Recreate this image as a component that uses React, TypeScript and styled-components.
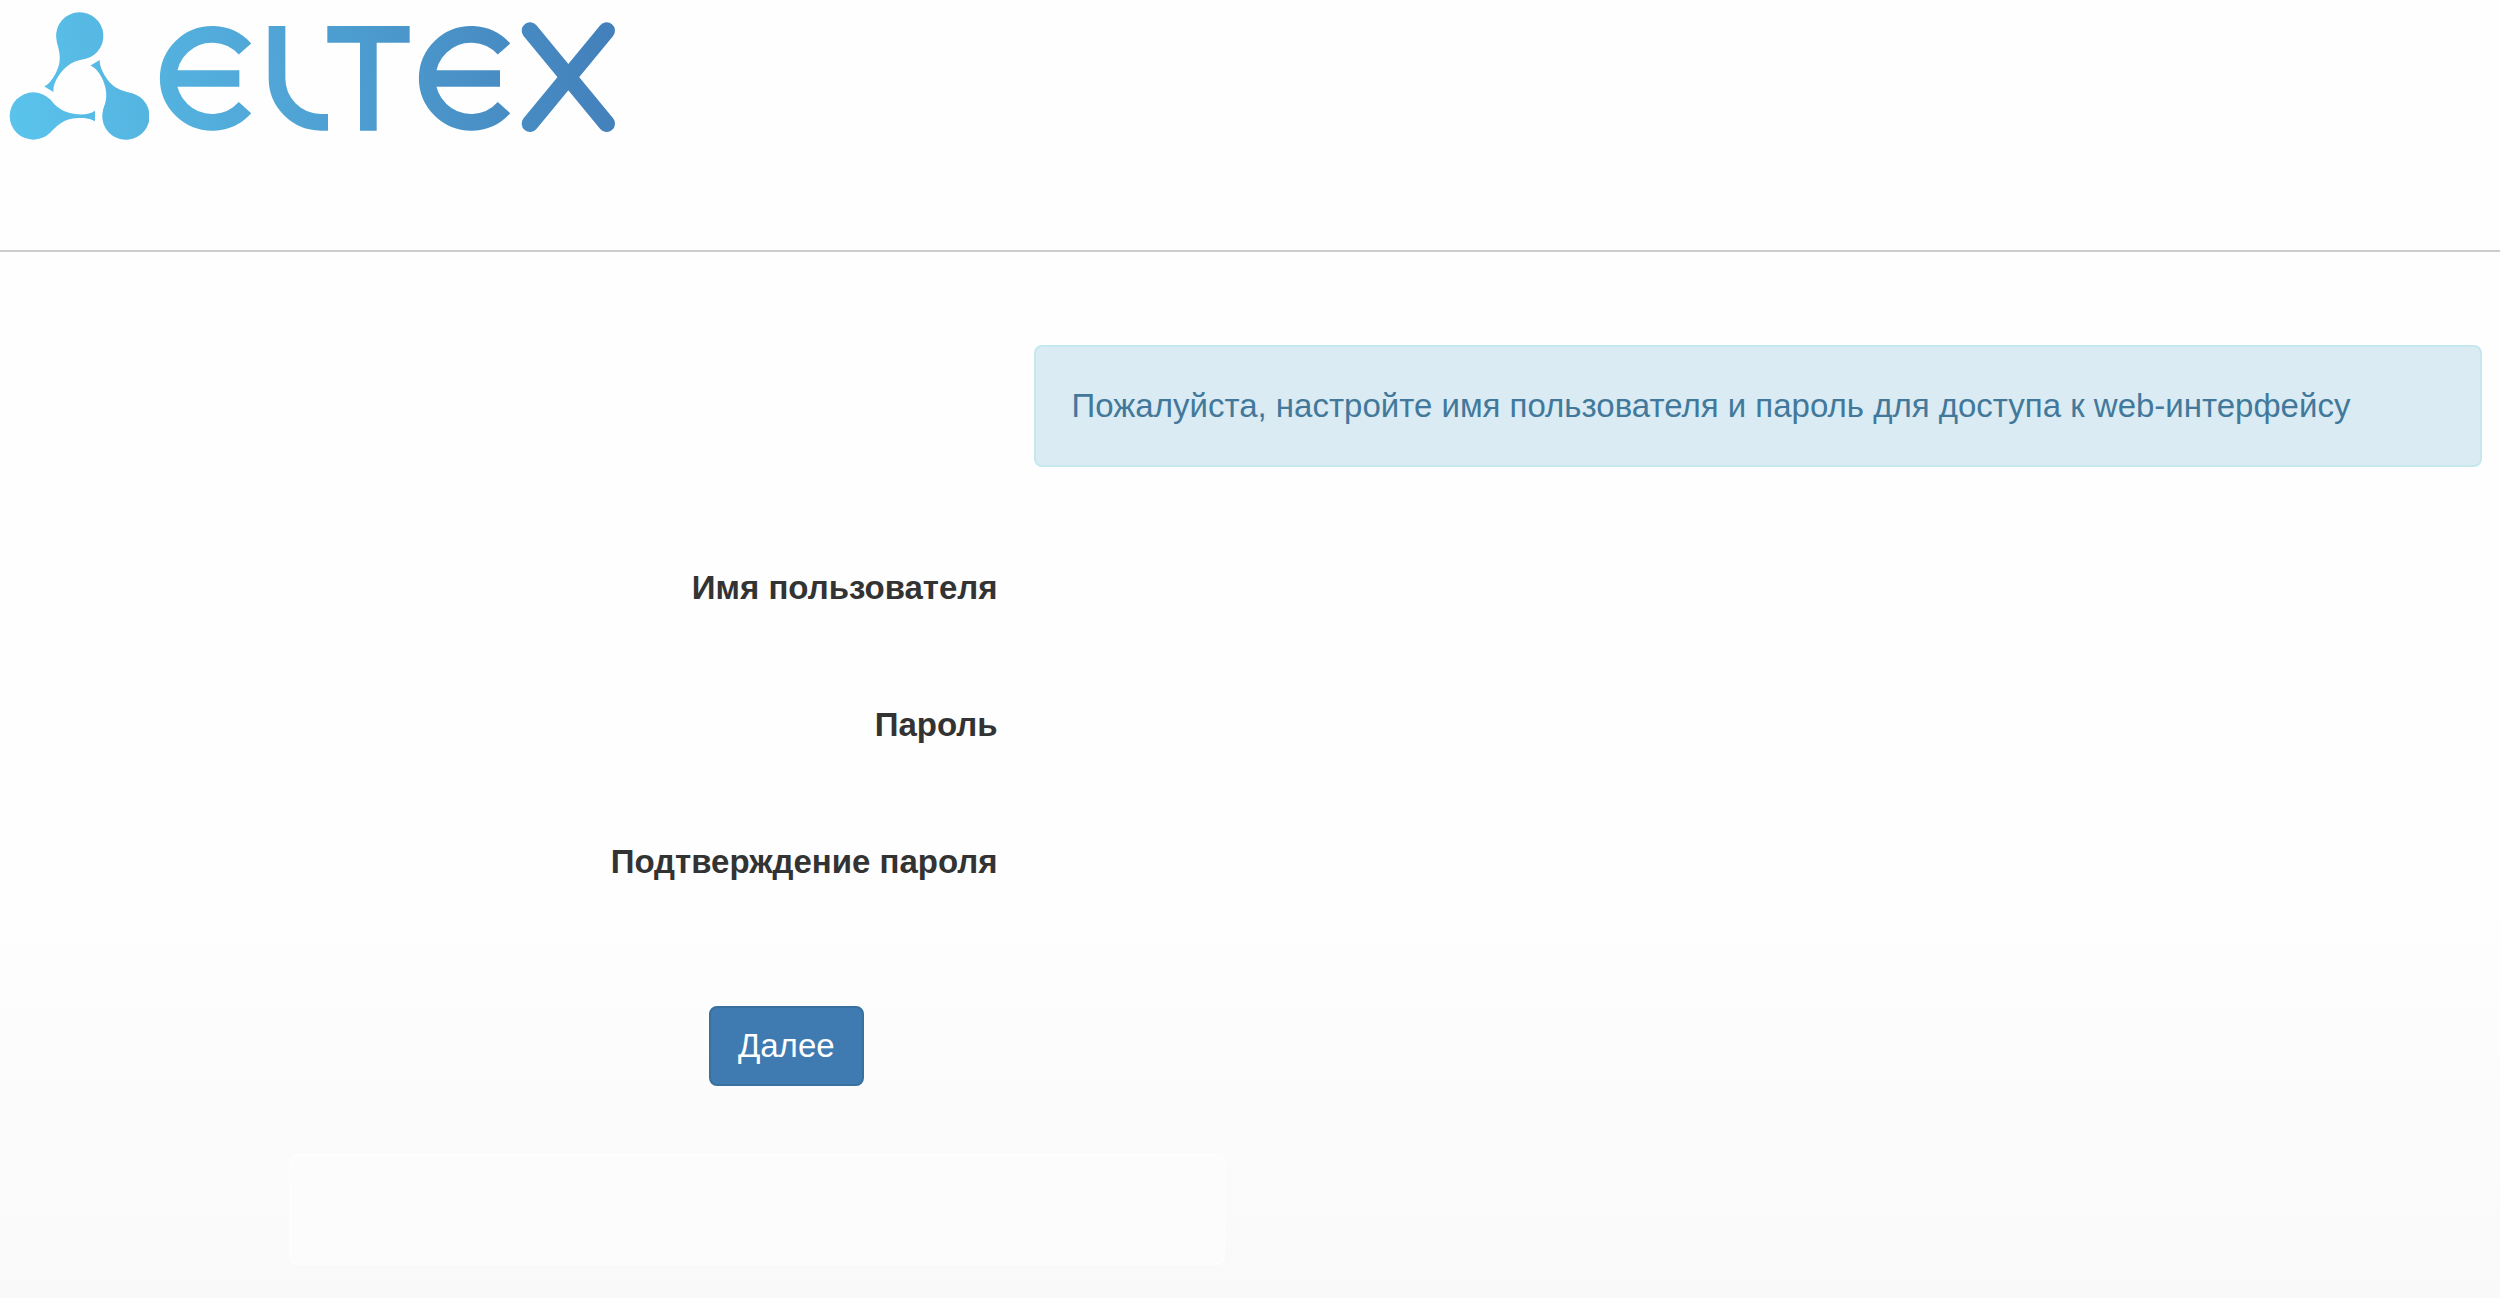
import React, { useState } from 'react';
import styled, { createGlobalStyle } from 'styled-components';

const GlobalStyle = createGlobalStyle`
  *, *::before, *::after { box-sizing: border-box; }
  body {
    margin: 0;
    min-height: 100vh;
    background: #fff linear-gradient(#fefefe 0, #fefefe 70%, #f9f9f9 100%) no-repeat;
    color: #333;
    font-family: "Liberation Sans", Arial, sans-serif;
    font-size: 33px;
    line-height: 48px;
  }
`;

const Header = styled.header`
  height: 252px;
  background: #fefefe;
  border-bottom: 2px solid #ccc;
`;

const Logo = styled.svg`
  display: block;
  width: 640px;
  height: 160px;
`;

const Form = styled.form`
  display: grid;
  grid-template-columns: 2fr 3fr;
  column-gap: 36px;
  padding: 93px 18px 0 32px;
`;

const Notice = styled.p`
  grid-column: 2;
  margin: 0 0 85px;
  padding: 35px 36px;
  border: 2px solid #c5e8ef;
  border-radius: 8px;
  background: #daebf3;
  color: #42799b;
`;

const Label = styled.label`
  padding: 12px 0;
  margin-bottom: 65px;
  font-weight: 700;
  text-align: right;
`;

const Field = styled.input`
  height: 72px;
  padding: 0 24px;
  border: 0;
  outline: 0;
  background: transparent;
  color: inherit;
  font: inherit;
`;

const Actions = styled.div`
  grid-column: 1;
  margin-top: 43px;
  padding-right: 134px;
  text-align: right;
`;

const Submit = styled.button`
  height: 80px;
  padding: 0 27px;
  border: 2px solid #38709f;
  border-radius: 8px;
  background: #3f7ab0;
  color: #fff;
  font: inherit;
`;

const Panel = styled.div`
  width: 936px;
  height: 111px;
  margin: 68px 0 0 289px;
  border: 2px solid #fdfdfd;
  border-radius: 8px;
  background: #fcfcfc;
`;

const dropPath =
  'M151 299 C168 318 184 338 235 343 C258 344 272 341 285 332 L285 364 C272 356 258 354 235 354 C188 356 174 376 148 400 Z';

function Drop({ angle }: { angle: number }) {
  return (
    <g transform={`rotate(${angle} 239 268)`}>
      <circle cx="100" cy="348" r="71" />
      <path d={dropPath} />
    </g>
  );
}

function EltexLogo() {
  return (
    <Logo viewBox="0 0 1920 480" role="img" aria-label="Eltex">
      <defs>
        <linearGradient id="brand" gradientUnits="userSpaceOnUse" x1="30" y1="420" x2="1845" y2="60">
          <stop offset="0" stopColor="#5ac4ec" />
          <stop offset="1" stopColor="#437fba" />
        </linearGradient>
        <mask id="emblem" maskUnits="userSpaceOnUse" x="0" y="0" width="1920" height="480">
          <g fill="#fff">
            <Drop angle={0} />
            <Drop angle={120} />
            <Drop angle={240} />
          </g>
          <rect x="447" width="20" height="480" fill="#000" />
          <g fill="none" stroke="#fff" strokeWidth="50">
            <path d="M735 147 A132 132 0 1 0 735 323 M525 235.5 H718" />
            <path d="M831 78 V235 A132 132 0 0 0 963 367 H984" />
            <path d="M982 103 H1229 M1105 103 V392" />
            <path d="M1512 147 A132 132 0 1 0 1512 323 M1302 235.5 H1500" />
            <path d="M1590 92 L1820 371 M1820 92 L1590 371" strokeLinecap="round" />
          </g>
        </mask>
      </defs>
      <rect width="1920" height="480" fill="url(#brand)" mask="url(#emblem)" />
    </Logo>
  );
}

const fields = [
  { id: 'username', label: 'Имя пользователя', type: 'text' },
  { id: 'password', label: 'Пароль', type: 'password' },
  { id: 'confirm', label: 'Подтверждение пароля', type: 'password' },
];

export default function App() {
  const [values, setValues] = useState<Record<string, string>>({});
  return (
    <>
      <GlobalStyle />
      <Header>
        <EltexLogo />
      </Header>
      <main>
        <Form onSubmit={(e) => e.preventDefault()}>
          <Notice>Пожалуйста, настройте имя пользователя и пароль для доступа к web-интерфейсу</Notice>
          {fields.map((f) => (
            <React.Fragment key={f.id}>
              <Label htmlFor={f.id}>{f.label}</Label>
              <Field
                id={f.id}
                type={f.type}
                value={values[f.id] ?? ''}
                onChange={(e) => setValues({ ...values, [f.id]: e.target.value })}
              />
            </React.Fragment>
          ))}
          <Actions>
            <Submit type="submit">Далее</Submit>
          </Actions>
        </Form>
        <Panel />
      </main>
    </>
  );
}
